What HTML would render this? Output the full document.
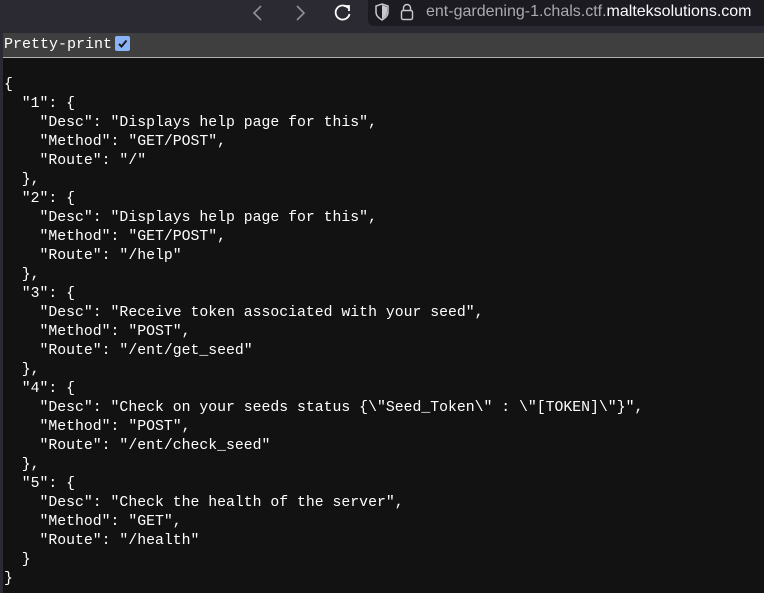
<!DOCTYPE html>
<html><head><meta charset="utf-8"><style>
body{margin:0;width:764px;height:593px;overflow:hidden;background:#2b2a33;font-family:"Liberation Sans",sans-serif;position:relative}
.tb{position:absolute;left:0;top:0;width:764px;height:32px;background:#2b2a33}
.url{position:absolute;left:368px;top:0;width:396px;height:26px;background:#1c1b22;border-radius:0 0 0 6px}
.urltext{position:absolute;left:426px;top:3px;font-size:16px;color:#a9a9b0;white-space:nowrap}
.urltext b{color:#fbfbfe;font-weight:normal}
.page{position:absolute;left:3px;top:33px;right:0;bottom:0;background:#121212}
.pp{height:24px;background:#3f3f3f;border-bottom:1px solid #b0b0b0;color:#fff;font-family:"Liberation Mono",monospace;font-size:15px;line-height:24px;padding-left:1px}
.cb{display:inline-block;width:15px;height:15px;background:#8ab4f8;border-radius:2px;vertical-align:-3px;margin-left:3px;position:relative}
pre{margin:0;position:absolute;left:1px;top:43px;font-family:"Liberation Mono",monospace;font-size:14.8px;line-height:19px;color:#fff}
</style></head><body>
<div class="tb">
<svg style="position:absolute;left:250px;top:4px" width="16" height="18"><path d="M11 2 L4 9 L11 16" stroke="#8f8f9d" stroke-width="1.6" fill="none"/></svg>
<svg style="position:absolute;left:293px;top:4px" width="16" height="18"><path d="M4 2 L11 9 L4 16" stroke="#8f8f9d" stroke-width="1.6" fill="none"/></svg>
<svg style="position:absolute;left:333px;top:3px" width="20" height="20"><path d="M15 5 A7 7 0 1 0 16.5 11" stroke="#fbfbfe" stroke-width="1.8" fill="none"/><path d="M11 3 L16 3 L16 8" stroke="#fbfbfe" stroke-width="1.8" fill="none"/></svg>
</div>
<div class="url"></div>
<svg style="position:absolute;left:375px;top:3px" width="14" height="18"><path d="M7 1 L13 3 L13 9 C13 13 10 15 7 17 C4 15 1 13 1 9 L1 3 Z" fill="none" stroke="#c8c8cf" stroke-width="1.5"/><path d="M7 2 L12 4 L12 9 C12 12 10 14 7 16Z" fill="#c8c8cf"/></svg>
<svg style="position:absolute;left:400px;top:3px" width="14" height="18"><rect x="1.5" y="7.5" width="11" height="9" rx="1.5" fill="none" stroke="#c8c8cf" stroke-width="1.4"/><path d="M3.5 7.5 V5 A3.5 3.5 0 0 1 10.5 5 V7.5" fill="none" stroke="#c8c8cf" stroke-width="1.4"/></svg>
<div class="urltext">ent-gardening-1.chals.ctf.<b>malteksolutions.com</b></div>
<div class="page">
<div class="pp">Pretty-print<span class="cb"><svg style="position:absolute;left:2px;top:2px" width="11" height="11"><path d="M2 6 L4.5 8.5 L9.5 2.5" stroke="#1c1b22" stroke-width="2" fill="none"/></svg></span></div>
<pre>{
  "1": {
    "Desc": "Displays help page for this",
    "Method": "GET/POST",
    "Route": "/"
  },
  "2": {
    "Desc": "Displays help page for this",
    "Method": "GET/POST",
    "Route": "/help"
  },
  "3": {
    "Desc": "Receive token associated with your seed",
    "Method": "POST",
    "Route": "/ent/get_seed"
  },
  "4": {
    "Desc": "Check on your seeds status {\"Seed_Token\" : \"[TOKEN]\"}",
    "Method": "POST",
    "Route": "/ent/check_seed"
  },
  "5": {
    "Desc": "Check the health of the server",
    "Method": "GET",
    "Route": "/health"
  }
}</pre>
</div>
</body></html>
